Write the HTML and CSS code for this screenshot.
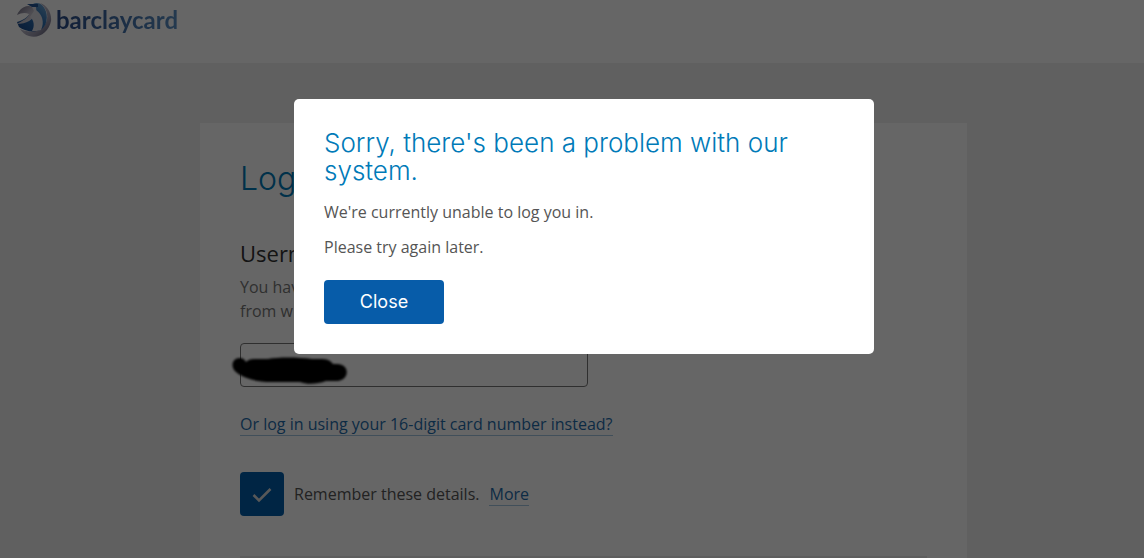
FILE: index.html
```html
<!DOCTYPE html>
<html lang="en">
<head>
<meta charset="utf-8">
<meta name="viewport" content="width=device-width, initial-scale=1">
<title>Barclaycard</title>
<link rel="stylesheet" href="styles.css">
</head>
<body>
<header class="header">
  <a class="brand" href="#">
    <svg class="globe" viewBox="0 0 36 36" aria-hidden="true">
      <defs>
        <linearGradient id="silver" x1="0" y1="0" x2="1" y2="1">
          <stop offset="0" stop-color="#66647c"/>
          <stop offset=".45" stop-color="#b9b6c6"/>
          <stop offset=".7" stop-color="#9997ac"/>
          <stop offset="1" stop-color="#565370"/>
        </linearGradient>
        <linearGradient id="blue" x1="0" y1="1" x2="1" y2="0">
          <stop offset="0" stop-color="#174486"/>
          <stop offset=".6" stop-color="#2f72b4"/>
          <stop offset="1" stop-color="#79acd8"/>
        </linearGradient>
        <linearGradient id="wing" x1="0" y1="0" x2="1" y2="1">
          <stop offset="0" stop-color="#666278"/>
          <stop offset=".5" stop-color="#b9b6c4"/>
          <stop offset="1" stop-color="#f4f3f6"/>
        </linearGradient>
      </defs>
      <path fill="url(#silver)" d="M24 1C31 3 36 11 35 19C33 30 23 37 13 34C9 33 6 30 4 27C12 31 23 30 28 24C34 16 31 6 24 1Z"/>
      <path fill="url(#blue)" d="M17 2C20 0 24 1 26 3C33 10 32 22 26 27C20 31 10 30 3 25L1 20C8 18 12 15 14 11L17 8Z"/>
      <path fill="url(#wing)" d="M1 13C4 6 10 3 17 4C20 3 21 7 20 10C18 18 10 22 1 22C6 19 12 16 13 12C9 10 5 11 1 13Z"/>
      <path fill="#dddce4" d="M13 4L18 3C20 3 20 6 20 8C26 12 29 20 25 28C22 29 19 29 16 29C19 24 18 18 14 15L18 9L16 5Z"/>
      <path fill="#235697" d="M11 2L16 5L22 5L22 2L16 2Z"/>
    </svg>
    <span class="wordmark">barclaycard</span>
  </a>
</header>

<main class="page">
  <form class="card">
    <h1 class="card-title">Log in</h1>
    <label class="field-label" for="username">Username</label>
    <p class="hint" id="hint">You have<br>from w</p>
    <div class="field">
      <input class="text-input" id="username" type="text" aria-describedby="hint">
      <svg class="scribble" viewBox="0 0 116 28" aria-hidden="true">
        <path d="M8 1C0 1-2 10 4 15C12 22 26 25 40 25L68 25C76 28 85 27 94 24L105 24C118 23 118 7 105 7L101 7C98 3 95 2 88 2L80 2C65 0 46 0 36 2L22 2C18 2 16 3 14 5C12 2 11 1 8 1Z"/>
      </svg>
    </div>
    <div class="switch-row"><a class="link" href="#">Or log in using your 16-digit card number instead?</a></div>
    <div class="remember">
      <span class="tick-box">
        <input class="tick-input" id="remember" type="checkbox" checked>
        <svg class="tick-mark" viewBox="0 0 20 16" aria-hidden="true"><path d="M1.500 8L7 13.500L18.500 2"/></svg>
      </span>
      <label for="remember">Remember these details.</label>
      <a class="link" href="#">More</a>
    </div>
    <hr class="divider">
  </form>
</main>

<div class="overlay">
  <section class="dialog" role="dialog" aria-modal="true" aria-labelledby="dialog-title">
    <h2 class="dialog-title" id="dialog-title">Sorry, there's been a problem with our system.</h2>
    <p class="dialog-text">We're currently unable to log you in.</p>
    <p class="dialog-text">Please try again later.</p>
    <button class="button" type="button">Close</button>
  </section>
</div>
</body>
</html>
```
FILE: styles.css
```css
* {
  box-sizing: border-box;
}

body {
  display: flex;
  flex-direction: column;
  min-height: 100vh;
  margin: 0;
  background: #f0f0f0;
  color: #555;
  font: 16px/24px "Open Sans", sans-serif;
}

h1, h2, p {
  margin: 0;
}

.header {
  height: 63px;
  padding: 2px 16px;
  background: #fff;
}

.brand {
  display: inline-flex;
  align-items: center;
  gap: 4px;
  text-decoration: none;
}

.globe {
  width: 36px;
  height: 36px;
}

.wordmark {
  background: linear-gradient(90deg, #2a4a86, #3f6ca6 45%, #5b90c6);
  background-clip: text;
  -webkit-background-clip: text;
  color: transparent;
  font: 700 24px/36px Lato, sans-serif;
}

.page {
  display: flex;
  flex: 1;
  justify-content: center;
  padding: 60px 0 0 23px;
}

.card {
  width: 100%;
  max-width: 767px;
  padding: 36px 40px 0;
  background: #fff;
}

.card-title {
  margin-bottom: 40px;
  color: #007ab8;
  font: 300 32px/40px Inter, sans-serif;
}

.field-label {
  display: block;
  margin-bottom: 8px;
  color: #333;
  font-size: 22px;
  line-height: 28px;
}

.hint {
  color: #777;
}

.field {
  position: relative;
  max-width: 348px;
  margin: 20px 0 25px;
}

.text-input {
  display: block;
  width: 100%;
  height: 44px;
  padding: 0 12px;
  border: 1px solid #777;
  border-radius: 4px;
  background: #fff;
  font: inherit;
}

.scribble {
  position: absolute;
  top: 14px;
  left: -8px;
  width: 116px;
  height: 28px;
  overflow: visible;
  filter: blur(1px);
}

.switch-row {
  margin-bottom: 36px;
}

.link {
  border-bottom: 1px solid #a3c5e2;
  color: #1f6cab;
  text-decoration: none;
}

.remember {
  display: flex;
  align-items: center;
  gap: 10px;
  margin-bottom: 40px;
}

.remember .link {
  line-height: 22px;
}

.tick-box {
  position: relative;
  width: 44px;
  height: 44px;
}

.tick-input {
  display: block;
  width: 100%;
  height: 100%;
  margin: 0;
  border-radius: 4px;
  background: #005eab;
  appearance: none;
}

.tick-mark {
  position: absolute;
  inset: 15px 12px;
  width: 20px;
  height: 16px;
  fill: none;
  stroke: #ddd;
  stroke-width: 2.5;
  pointer-events: none;
}

.divider {
  height: 2px;
  margin: 0;
  border: 0;
  background: #ebebeb;
}

.overlay {
  position: fixed;
  inset: 0;
  display: flex;
  align-items: flex-start;
  justify-content: center;
  padding: 99px 0 0 24px;
  background: rgba(0, 0, 0, 0.6);
}

.dialog {
  width: 100%;
  max-width: 580px;
  padding: 30px;
  border-radius: 5px;
  background: #fff;
}

.dialog-title {
  margin-bottom: 15px;
  color: #007ab8;
  font: 300 26px/28px Inter, sans-serif;
}

.dialog-text {
  margin-bottom: 11px;
}

.button {
  display: block;
  min-width: 120px;
  height: 44px;
  margin-top: 21px;
  border: 0;
  border-radius: 4px;
  background: #075ca9;
  color: #fff;
  font: 400 18px/24px Inter, sans-serif;
}
```
